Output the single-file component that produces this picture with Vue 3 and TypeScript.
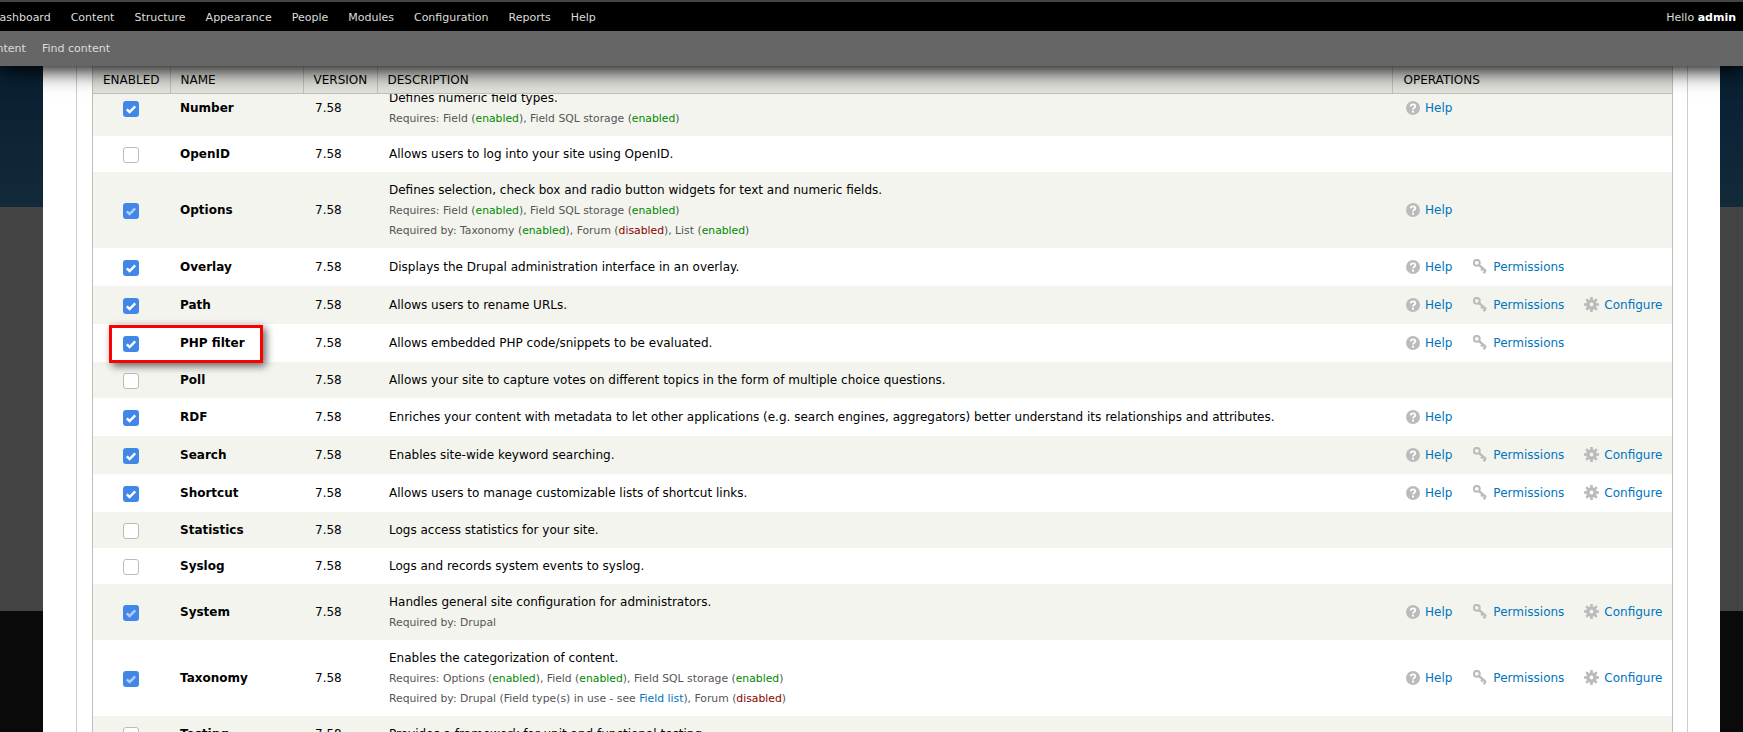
<script setup lang="ts">
type Req = { label: string; state?: "enabled" | "disabled" };
interface ModuleRow {
  name: string;
  on: boolean;
  locked?: boolean;
  desc: string;
  requires?: Req[];
  requiredBy?: Req[];
  ops?: string[];
  flagged?: boolean;
}

const nav = ["Dashboard", "Content", "Structure", "Appearance", "People", "Modules", "Configuration", "Reports", "Help"];

const HP = ["Help", "Permissions"];
const HPC = ["Help", "Permissions", "Configure"];

const modules: ModuleRow[] = [
  {
    name: "Number", on: true, desc: "Defines numeric field types.",
    requires: [{ label: "Field", state: "enabled" }, { label: "Field SQL storage", state: "enabled" }],
    ops: ["Help"],
  },
  { name: "OpenID", on: false, desc: "Allows users to log into your site using OpenID." },
  {
    name: "Options", on: true, locked: true,
    desc: "Defines selection, check box and radio button widgets for text and numeric fields.",
    requires: [{ label: "Field", state: "enabled" }, { label: "Field SQL storage", state: "enabled" }],
    requiredBy: [{ label: "Taxonomy", state: "enabled" }, { label: "Forum", state: "disabled" }, { label: "List", state: "enabled" }],
    ops: ["Help"],
  },
  { name: "Overlay", on: true, desc: "Displays the Drupal administration interface in an overlay.", ops: HP },
  { name: "Path", on: true, desc: "Allows users to rename URLs.", ops: HPC },
  { name: "PHP filter", on: true, desc: "Allows embedded PHP code/snippets to be evaluated.", ops: HP, flagged: true },
  { name: "Poll", on: false, desc: "Allows your site to capture votes on different topics in the form of multiple choice questions." },
  {
    name: "RDF", on: true,
    desc: "Enriches your content with metadata to let other applications (e.g. search engines, aggregators) better understand its relationships and attributes.",
    ops: ["Help"],
  },
  { name: "Search", on: true, desc: "Enables site-wide keyword searching.", ops: HPC },
  { name: "Shortcut", on: true, desc: "Allows users to manage customizable lists of shortcut links.", ops: HPC },
  { name: "Statistics", on: false, desc: "Logs access statistics for your site." },
  { name: "Syslog", on: false, desc: "Logs and records system events to syslog." },
  {
    name: "System", on: true, locked: true, desc: "Handles general site configuration for administrators.",
    requiredBy: [{ label: "Drupal" }],
    ops: HPC,
  },
  {
    name: "Taxonomy", on: true, locked: true, desc: "Enables the categorization of content.",
    requires: [{ label: "Options", state: "enabled" }, { label: "Field", state: "enabled" }, { label: "Field SQL storage", state: "enabled" }],
    requiredBy: [{ label: "Drupal" }],
    ops: HPC,
  },
  { name: "Testing", on: false, desc: "Provides a framework for unit and functional testing." },
];
</script>

<template>
  <div class="page">
    <header class="toolbar">
      <div class="menu">
        <nav class="menu-links">
          <a v-for="item in nav" :key="item">{{ item }}</a>
        </nav>
        <span class="hello">Hello <strong>admin</strong></span>
      </div>
      <div class="drawer">
        <a>Add content</a>
        <a>Find content</a>
      </div>
    </header>

    <main class="content">
      <section class="fieldset">
        <div class="table-wrap">
          <table class="grid head">
            <colgroup>
              <col class="c1" /><col class="c2" /><col class="c3" /><col class="c4" /><col class="c5" />
            </colgroup>
            <thead>
              <tr>
                <th>Enabled</th>
                <th>Name</th>
                <th>Version</th>
                <th>Description</th>
                <th>Operations</th>
              </tr>
            </thead>
          </table>
          <div class="rows">
            <table class="grid body">
              <colgroup>
                <col class="c1" /><col class="c2" /><col class="c3" /><col class="c4" /><col class="c5" />
              </colgroup>
              <tbody>
                <tr v-for="(m, i) in modules" :key="m.name" :class="i % 2 === 0 ? 'even' : 'odd'">
                  <td class="check-cell">
                    <span v-if="m.flagged" class="flag"></span>
                    <span class="box" :class="{ on: m.on, locked: m.locked }">
                      <svg v-if="m.on" viewBox="0 0 16 16" width="16" height="16">
                        <path d="M3.8 8.4 6.6 11 12.2 5.4" fill="none" stroke="#fff" stroke-width="2.4" />
                      </svg>
                    </span>
                  </td>
                  <td class="name">{{ m.name }}</td>
                  <td class="version">7.58</td>
                  <td class="desc">
                    <div>{{ m.desc }}</div>
                    <div v-if="m.requires" class="req">
                      Requires:
                      <template v-for="(r, j) in m.requires" :key="r.label">
                        {{ r.label }} (<span :class="r.state">{{ r.state }}</span>)<template v-if="j < m.requires.length - 1">, </template>
                      </template>
                    </div>
                    <div v-if="m.requiredBy" class="req">
                      Required by:
                      <template v-if="m.name === 'Taxonomy'">
                        Drupal (Field type(s) in use - see <a class="link">Field list</a>), Forum (<span class="disabled">disabled</span>)
                      </template>
                      <template v-else>
                        <template v-for="(r, j) in m.requiredBy" :key="r.label">
                          {{ r.label }}<template v-if="r.state"> (<span :class="r.state">{{ r.state }}</span>)</template><template v-if="j < m.requiredBy.length - 1">, </template>
                        </template>
                      </template>
                    </div>
                  </td>
                  <td class="ops">
                    <div v-if="m.ops" class="op-list">
                      <a v-for="op in m.ops" :key="op" class="op">
                        <svg v-if="op === 'Help'" viewBox="0 0 14 14" width="14" height="14">
                          <circle cx="7" cy="7" r="7" fill="#bbb" />
                          <path d="M4.7 5.4C4.8 2.8 9.3 2.8 9.3 5.2 9.3 6.8 7 6.7 7 8.6" fill="none" stroke="#fff" stroke-width="1.8" />
                          <rect x="6" y="9.6" width="2" height="2" fill="#fff" />
                        </svg>
                        <svg v-else-if="op === 'Permissions'" class="key" viewBox="0 0 15 15" width="15" height="15">
                          <circle cx="3.8" cy="3.8" r="2.9" fill="none" stroke="#bbb" stroke-width="2" />
                          <path d="M5.8 5.8 13 12.2M9.8 9.4 8.2 11.4M12.4 11.4 10.8 14.4" fill="none" stroke="#bbb" stroke-width="2.4" />
                        </svg>
                        <svg v-else viewBox="0 0 15 15" width="15" height="15">
                          <circle cx="7.5" cy="7.5" r="3.6" fill="none" stroke="#bbb" stroke-width="3.4" />
                          <path d="M7.5 0V15M0 7.5H15M2.2 2.2 12.8 12.8M12.8 2.2 2.2 12.8" stroke="#bbb" stroke-width="2.6" stroke-dasharray="3 9 3" fill="none" />
                        </svg>
                        <span>{{ op }}</span>
                      </a>
                    </div>
                  </td>
                </tr>
              </tbody>
            </table>
          </div>
        </div>
      </section>
    </main>
  </div>
</template>

<style>
html,
body {
  margin: 0;
  overflow: hidden;
}
</style>

<style scoped>
.page {
  position: relative;
  height: 732px;
  overflow: hidden;
  padding-left: 43px;
  box-sizing: border-box;
  font-family: "DejaVu Sans", sans-serif;
  font-size: 12px;
  color: #000;
  background:
    linear-gradient(#021a2c, #132a3b) 0 0 / 100% 207px no-repeat,
    linear-gradient(#444, #444) 0 207px / 100% 404px no-repeat,
    #0a0a0a;
}

.toolbar {
  position: absolute;
  top: 0;
  left: 0;
  right: 0;
  z-index: 5;
  box-shadow: 0 4px 20px #000;
  color: #ddd;
}

.menu {
  height: 29px;
  border-top: 2px solid #444;
  background: #000;
  display: flex;
  align-items: center;
  justify-content: space-between;
  padding-right: 7px;
  font-size: 11px;
}

.menu-links {
  display: flex;
  gap: 20px;
  margin-left: -9px;
  padding-top: 1px;
}

.hello {
  padding-top: 1px;
}

.hello strong {
  color: #fff;
}

.drawer {
  height: 35px;
  background: #666;
  display: flex;
  align-items: center;
  gap: 16px;
  margin-left: -41px;
  font-size: 11px;
}

.content {
  width: 1677px;
  height: 732px;
  background: #fff;
  padding: 66px 32px 0 33px;
  box-sizing: border-box;
}

.fieldset {
  height: 100%;
  border-left: 1px solid #ccc;
  border-right: 1px solid #ccc;
  padding: 0 14px 0 15px;
}

.table-wrap {
  height: 100%;
  display: flex;
  flex-direction: column;
  border-left: 1px solid #bebfb9;
  border-right: 1px solid #bebfb9;
}

.grid {
  width: 1579px;
  table-layout: fixed;
  border-collapse: collapse;
}

.c1 { width: 77px; }
.c2 { width: 133px; }
.c3 { width: 74px; }
.c4 { width: 1015px; }
.c5 { width: 280px; }

.head {
  position: relative;
  z-index: 2;
}

.head th {
  height: 27px;
  padding: 2px 0 0 10px;
  box-sizing: border-box;
  background: #e1e2dc;
  border-left: 1px solid #bebfb9;
  border-bottom: 1px solid #bebfb9;
  font-weight: normal;
  font-size: 12px;
  text-align: left;
  text-transform: uppercase;
}

.head th:first-child {
  border-left: 0;
}

.head th:last-child {
  padding-left: 11px;
}

.rows {
  flex: 1;
  overflow: hidden;
}

.body {
  margin-top: -14px;
}

.body td {
  padding: 9px 0 9px 10px;
  line-height: 18px;
  vertical-align: middle;
}

.even { background: #f3f4ee; }
.odd { background: #fff; }

.check-cell {
  position: relative;
}

.body .check-cell {
  padding: 11px 0 9px;
}

.box {
  display: block;
  width: 16px;
  height: 16px;
  box-sizing: border-box;
  margin-left: 30px;
  border: 1px solid #bcbcb8;
  border-radius: 3px;
  background: #fff;
}

.box.on {
  border: 0;
  background: #4187e8;
}

.box.locked svg {
  opacity: 0.6;
}

.box svg {
  display: block;
}

.flag {
  position: absolute;
  left: 16px;
  top: 1px;
  width: 154px;
  height: 38px;
  box-sizing: border-box;
  border: 3px solid #f00;
  box-shadow: 3px 3px 8px rgba(0, 0, 0, 0.6);
  z-index: 1;
}

.name {
  font-weight: bold;
}

.body .version {
  padding-left: 12px;
}

.body .desc {
  padding-left: 12px;
}

.req {
  font-size: 10.8px;
  line-height: 20px;
  padding-top: 2px;
  margin-bottom: -2px;
  color: #555;
}

.enabled { color: #080; }
.disabled { color: #800; }
.link { color: #0074bd; }

.body .ops {
  padding-left: 14px;
}

.op-list {
  display: flex;
  gap: 20px;
  height: 20px;
  align-items: center;
}

.op {
  display: flex;
  align-items: center;
  gap: 5px;
  color: #0074bd;
}

.key {
  margin-left: 1px;
}
</style>
